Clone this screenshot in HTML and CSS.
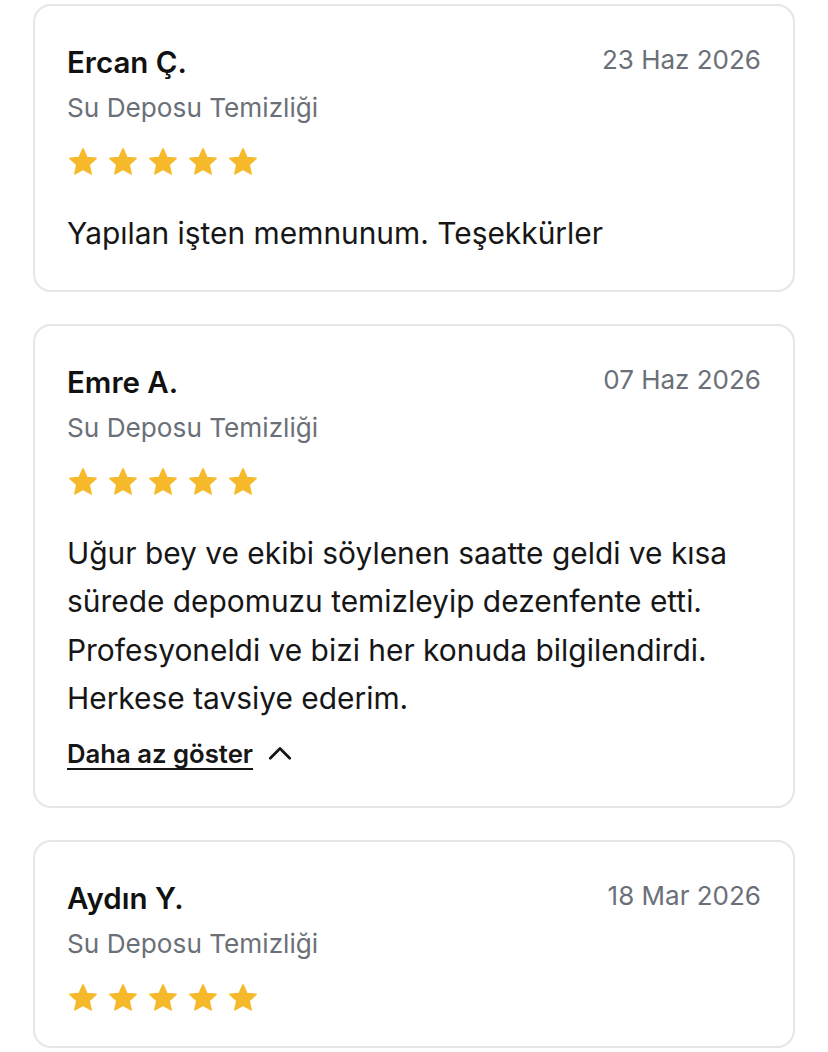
FILE: index.html
```html
<!DOCTYPE html>
<html lang="tr">
<head>
    <meta charset="UTF-8">
    <meta name="viewport" content="width=device-width, initial-scale=1.0">
    <title>Değerlendirmeler</title>
    <link rel="stylesheet" href="styles.css">
</head>
<body>
    <div class="reviews">
        <div class="review-card">
            <div class="review-head">
                <div class="reviewer">Ercan Ç.</div>
                <div class="review-date">23 Haz 2026</div>
            </div>
            <div class="service">Su Deposu Temizliği</div>
            <div class="stars">
                <svg viewBox="0 0 24 24"><path d="M12 2.2l2.9 6.4 6.9.7-5.2 4.7 1.5 6.9L12 17.4l-6.1 3.5 1.5-6.9-5.2-4.7 6.9-.7z"/></svg>
                <svg viewBox="0 0 24 24"><path d="M12 2.2l2.9 6.4 6.9.7-5.2 4.7 1.5 6.9L12 17.4l-6.1 3.5 1.5-6.9-5.2-4.7 6.9-.7z"/></svg>
                <svg viewBox="0 0 24 24"><path d="M12 2.2l2.9 6.4 6.9.7-5.2 4.7 1.5 6.9L12 17.4l-6.1 3.5 1.5-6.9-5.2-4.7 6.9-.7z"/></svg>
                <svg viewBox="0 0 24 24"><path d="M12 2.2l2.9 6.4 6.9.7-5.2 4.7 1.5 6.9L12 17.4l-6.1 3.5 1.5-6.9-5.2-4.7 6.9-.7z"/></svg>
                <svg viewBox="0 0 24 24"><path d="M12 2.2l2.9 6.4 6.9.7-5.2 4.7 1.5 6.9L12 17.4l-6.1 3.5 1.5-6.9-5.2-4.7 6.9-.7z"/></svg>
            </div>
            <p class="comment">Yapılan işten memnunum. Teşekkürler</p>
        </div>

        <div class="review-card">
            <div class="review-head">
                <div class="reviewer">Emre A.</div>
                <div class="review-date">07 Haz 2026</div>
            </div>
            <div class="service">Su Deposu Temizliği</div>
            <div class="stars">
                <svg viewBox="0 0 24 24"><path d="M12 2.2l2.9 6.4 6.9.7-5.2 4.7 1.5 6.9L12 17.4l-6.1 3.5 1.5-6.9-5.2-4.7 6.9-.7z"/></svg>
                <svg viewBox="0 0 24 24"><path d="M12 2.2l2.9 6.4 6.9.7-5.2 4.7 1.5 6.9L12 17.4l-6.1 3.5 1.5-6.9-5.2-4.7 6.9-.7z"/></svg>
                <svg viewBox="0 0 24 24"><path d="M12 2.2l2.9 6.4 6.9.7-5.2 4.7 1.5 6.9L12 17.4l-6.1 3.5 1.5-6.9-5.2-4.7 6.9-.7z"/></svg>
                <svg viewBox="0 0 24 24"><path d="M12 2.2l2.9 6.4 6.9.7-5.2 4.7 1.5 6.9L12 17.4l-6.1 3.5 1.5-6.9-5.2-4.7 6.9-.7z"/></svg>
                <svg viewBox="0 0 24 24"><path d="M12 2.2l2.9 6.4 6.9.7-5.2 4.7 1.5 6.9L12 17.4l-6.1 3.5 1.5-6.9-5.2-4.7 6.9-.7z"/></svg>
            </div>
            <p class="comment">Uğur bey ve ekibi söylenen saatte geldi ve kısa<br>sürede depomuzu temizleyip dezenfente etti.<br>Profesyoneldi ve bizi her konuda bilgilendirdi.<br>Herkese tavsiye ederim.</p>
            <a class="toggle-more" href="#">
                <span>Daha az göster</span>
                <svg viewBox="0 0 24 24"><path d="M3 16l9-9 9 9"/></svg>
            </a>
        </div>

        <div class="review-card">
            <div class="review-head">
                <div class="reviewer">Aydın Y.</div>
                <div class="review-date">18 Mar 2026</div>
            </div>
            <div class="service">Su Deposu Temizliği</div>
            <div class="stars">
                <svg viewBox="0 0 24 24"><path d="M12 2.2l2.9 6.4 6.9.7-5.2 4.7 1.5 6.9L12 17.4l-6.1 3.5 1.5-6.9-5.2-4.7 6.9-.7z"/></svg>
                <svg viewBox="0 0 24 24"><path d="M12 2.2l2.9 6.4 6.9.7-5.2 4.7 1.5 6.9L12 17.4l-6.1 3.5 1.5-6.9-5.2-4.7 6.9-.7z"/></svg>
                <svg viewBox="0 0 24 24"><path d="M12 2.2l2.9 6.4 6.9.7-5.2 4.7 1.5 6.9L12 17.4l-6.1 3.5 1.5-6.9-5.2-4.7 6.9-.7z"/></svg>
                <svg viewBox="0 0 24 24"><path d="M12 2.2l2.9 6.4 6.9.7-5.2 4.7 1.5 6.9L12 17.4l-6.1 3.5 1.5-6.9-5.2-4.7 6.9-.7z"/></svg>
                <svg viewBox="0 0 24 24"><path d="M12 2.2l2.9 6.4 6.9.7-5.2 4.7 1.5 6.9L12 17.4l-6.1 3.5 1.5-6.9-5.2-4.7 6.9-.7z"/></svg>
            </div>
        </div>
    </div>
</body>
</html>
```

FILE: styles.css
```css
body {
    margin: 0;
    background: #ffffff;
    font-family: Inter, "Noto Sans", sans-serif;
    color: #161616;
}

.reviews {
    display: flex;
    flex-direction: column;
    gap: 32px;
    padding: 4px 33px 0;
}

.review-card {
    border: 2px solid #e6e6e6;
    border-radius: 18px;
    padding: 32px;
    display: flex;
    flex-direction: column;
}

.review-head {
    display: flex;
    justify-content: space-between;
    align-items: flex-start;
}

.reviewer {
    font-size: 29.5px;
    font-weight: 600;
    line-height: 48px;
    color: #111111;
}

.review-date {
    font-size: 26px;
    line-height: 44px;
    color: #6b7078;
}

.service {
    font-size: 26.2px;
    line-height: 40px;
    margin-top: 2px;
    color: #6b7078;
}

.stars {
    display: flex;
    gap: 8px;
    margin-top: 18px;
}

.stars svg {
    width: 32px;
    height: 32px;
    fill: #f6b92b;
    stroke: #f6b92b;
    stroke-width: 1.2;
    stroke-linejoin: round;
}

.comment {
    margin: 31px 0 0;
    font-size: 29.9px;
    line-height: 48.5px;
    color: #161616;
}

.toggle-more {
    display: flex;
    align-items: center;
    gap: 14px;
    margin-top: 11px;
    line-height: 40px;
    font-size: 25.7px;
    font-weight: 600;
    color: #161616;
    text-decoration: none;
}

.toggle-more span {
    text-decoration: underline;
    text-decoration-skip-ink: none;
    text-underline-offset: 5px;
    text-decoration-thickness: 2px;
}

.toggle-more svg {
    width: 26px;
    height: 26px;
    fill: none;
    stroke: #161616;
    stroke-width: 2.6;
    stroke-linecap: round;
    stroke-linejoin: round;
}
```
